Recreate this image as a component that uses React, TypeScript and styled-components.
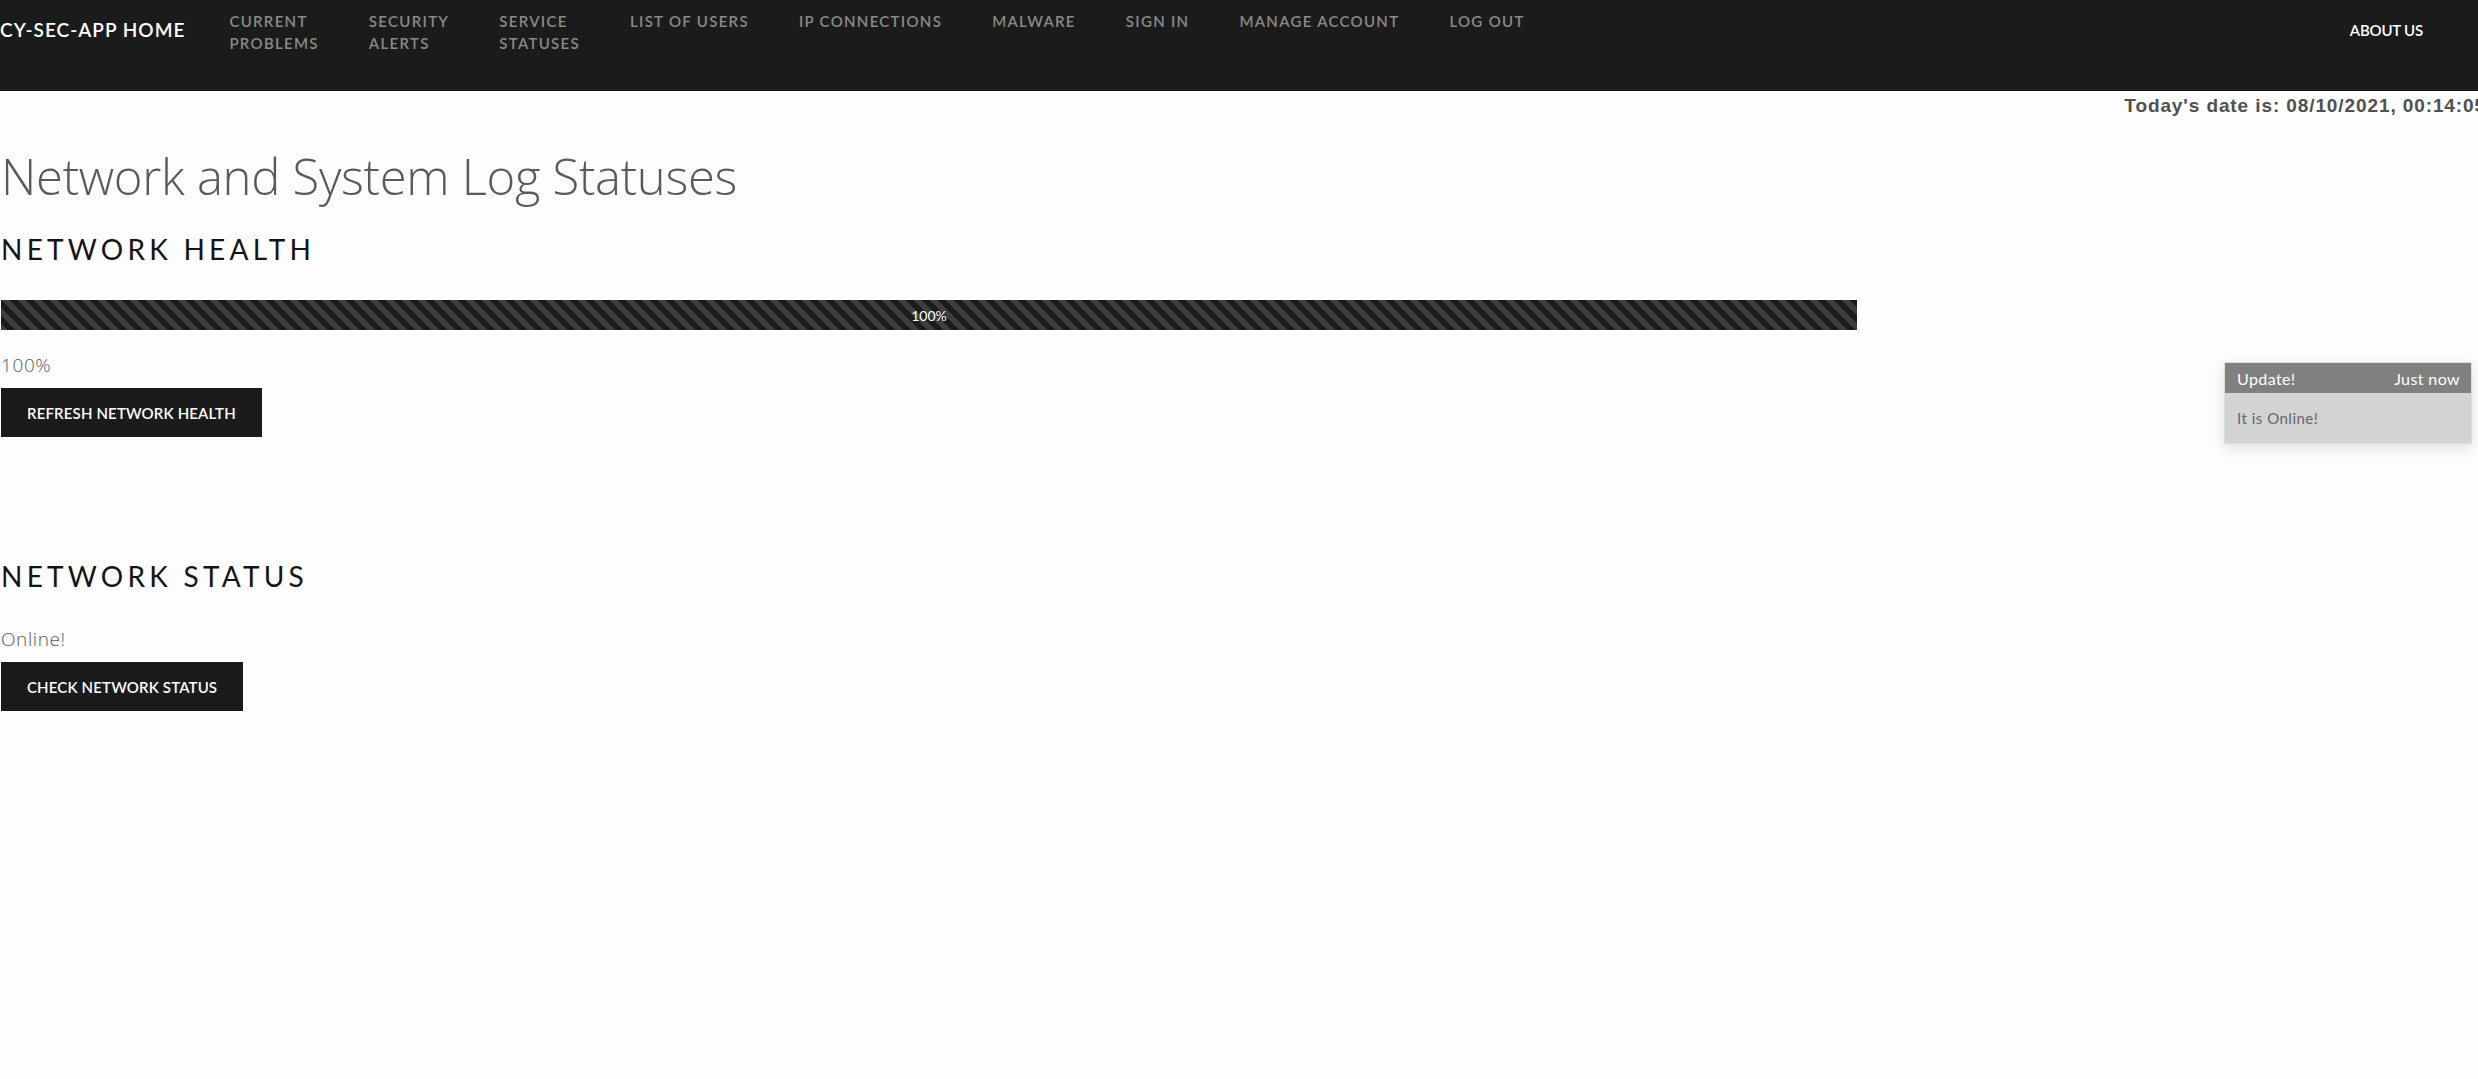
import React from "react";
import styled, { createGlobalStyle } from "styled-components";

const Global = createGlobalStyle`
  html, body { margin: 0; padding: 0; background: #fdfdfd; overflow-x: hidden; }
  * { box-sizing: border-box; }
`;

const Page = styled.div`
  position: relative;
  min-height: 1079px;
  background: #fdfdfd;
  font-family: "Lato", "Open Sans", sans-serif;
`;

const NavBar = styled.nav`
  height: 91px;
  background: #1b1b1b;
  display: flex;
  align-items: flex-start;
  padding-right: 55px;
`;

const Brand = styled.a`
  color: #ffffff;
  font-family: "Lato", sans-serif;
  font-weight: 600;
  font-size: 19px;
  line-height: 22px;
  margin-top: 19px;
  margin-right: 19px;
  white-space: nowrap;
  letter-spacing: 1px;
`;

const NavList = styled.div`
  display: flex;
  align-items: flex-start;
  flex: 1;
  padding-top: 10px;
`;

const NavItem = styled.a`
  color: #8a8a8a;
  font-family: "Lato", sans-serif;
  font-weight: 600;
  font-size: 15px;
  line-height: 22px;
  padding: 0 25px;
  white-space: nowrap;
  letter-spacing: 1.3px;
`;

const AboutLink = styled.a`
  color: #ffffff;
  font-family: "Lato", sans-serif;
  font-weight: 600;
  font-size: 15px;
  line-height: 22px;
  margin-top: 19px;
  letter-spacing: -0.2px;
`;

const DateLine = styled.div`
  display: flex;
  justify-content: flex-end;
  height: 28px;
  margin-top: 1px;
`;

const DateText = styled.span`
  font-family: "Liberation Sans", Arial, sans-serif;
  font-weight: 700;
  font-size: 19px;
  line-height: 28px;
  color: #505050;
  letter-spacing: 0.9px;
  margin-right: -8px;
  white-space: nowrap;
`;

const Main = styled.main`
  padding: 0 0 0 1px;
`;

const Title = styled.h1`
  margin: 23px 0 0 0;
  font-family: "Open Sans", sans-serif;
  font-weight: 300;
  font-size: 49px;
  line-height: 66px;
  color: #5a5a5a;
  letter-spacing: -0.3px;
`;

const SectionHeading = styled.h2<{ $top: number }>`
  margin: ${(p) => p.$top}px 0 0 0;
  font-family: "Lato", sans-serif;
  font-weight: 400;
  font-size: 28px;
  line-height: 34px;
  letter-spacing: 4.25px;
  color: #141414;
`;

const ProgressTrack = styled.div`
  width: 1856px;
  height: 30px;
  margin-top: 34px;
  background: #e9ecef;
  overflow: hidden;
`;

const ProgressFill = styled.div`
  height: 100%;
  background-color: #1b1b1b;
  background-image: linear-gradient(
    45deg,
    rgba(255, 255, 255, 0.15) 25%,
    transparent 25%,
    transparent 50%,
    rgba(255, 255, 255, 0.15) 50%,
    rgba(255, 255, 255, 0.15) 75%,
    transparent 75%,
    transparent
  );
  background-size: 16px 16px;
  display: flex;
  align-items: center;
  justify-content: center;
  color: #ffffff;
  font-family: "Lato", sans-serif;
  font-size: 14px;
`;

const Value = styled.p<{ $top: number }>`
  margin: ${(p) => p.$top}px 0 0 0;
  font-family: "Open Sans", sans-serif;
  font-weight: 300;
  font-size: 19px;
  line-height: 24px;
  letter-spacing: 0.6px;
  color: #585858;
`;

const ActionButton = styled.button`
  display: block;
  height: 49px;
  margin-top: 11px;
  padding: 0 26px;
  border: none;
  background: #1b1b1b;
  color: #ffffff;
  font-family: "Lato", sans-serif;
  font-weight: 600;
  font-size: 15px;
  letter-spacing: 0.15px;
  cursor: pointer;
`;

const Toast = styled.div`
  position: absolute;
  top: 362px;
  right: 6px;
  width: 248px;
  background: #d3d3d3;
  box-shadow: 0 4px 12px rgba(0, 0, 0, 0.12);
  border: 1px solid #e0e0e0;
  font-family: "Lato", sans-serif;
`;

const ToastHeader = styled.div`
  height: 30px;
  padding: 0 11px 0 12px;
  background: #808080;
  color: #ffffff;
  display: flex;
  align-items: center;
  justify-content: space-between;
  font-size: 16px;
  letter-spacing: 0.4px;
`;

const ToastBody = styled.div`
  padding: 15px 12px 15px 12px;
  color: #666666;
  font-size: 15px;
  line-height: 20px;
  letter-spacing: 0.5px;
`;

export default function App() {
  const health = 100;
  return (
    <Page>
      <Global />
      <NavBar>
        <Brand>CY-SEC-APP HOME</Brand>
        <NavList>
          <NavItem>CURRENT<br />PROBLEMS</NavItem>
          <NavItem>SECURITY<br />ALERTS</NavItem>
          <NavItem>SERVICE<br />STATUSES</NavItem>
          <NavItem>LIST OF USERS</NavItem>
          <NavItem>IP CONNECTIONS</NavItem>
          <NavItem>MALWARE</NavItem>
          <NavItem>SIGN IN</NavItem>
          <NavItem>MANAGE ACCOUNT</NavItem>
          <NavItem>LOG OUT</NavItem>
        </NavList>
        <AboutLink>ABOUT US</AboutLink>
      </NavBar>
      <DateLine>
        <DateText>Today's date is: 08/10/2021, 00:14:05</DateText>
      </DateLine>
      <Main>
        <Title>Network and System Log Statuses</Title>
        <SectionHeading $top={23}>NETWORK HEALTH</SectionHeading>
        <ProgressTrack>
          <ProgressFill style={{ width: `${health}%` }}>{health}%</ProgressFill>
        </ProgressTrack>
        <Value $top={23}>100%</Value>
        <ActionButton>REFRESH NETWORK HEALTH</ActionButton>
        <SectionHeading $top={122}>NETWORK STATUS</SectionHeading>
        <Value $top={34}>Online!</Value>
        <ActionButton>CHECK NETWORK STATUS</ActionButton>
      </Main>
      <Toast>
        <ToastHeader>
          <span>Update!</span>
          <span>Just now</span>
        </ToastHeader>
        <ToastBody>It is Online!</ToastBody>
      </Toast>
    </Page>
  );
}
